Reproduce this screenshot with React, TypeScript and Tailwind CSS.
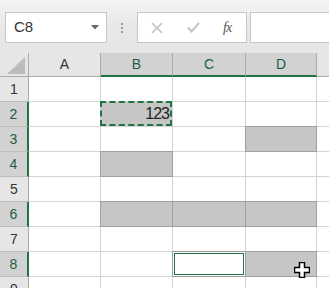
import React from "react";

const GREEN = "#217346";

type Fill = "none" | "gray" | "active";

const cols = ["A", "B", "C", "D"];
const rows = [1, 2, 3, 4, 5, 6, 7, 8, 9];
const selRows = [2, 3, 4, 6, 8];
const selCols = ["B", "C", "D"];

const fillOf = (r: number, c: string): Fill => {
    if (r === 3 && c === "D") return "gray";
    if (r === 4 && c === "B") return "gray";
    if (r === 6 && c !== "A") return "gray";
    if (r === 8 && c === "D") return "gray";
    if (r === 8 && c === "C") return "active";
    return "none";
};

const Cell = ({ r, c }: { r: number; c: string }) => {
    const fill = fillOf(r, c);
    if (r === 2 && c === "B") {
        return (
            <div className="relative border-r border-b border-[#d4d4d4] bg-[#c6c6c6]">
                <div className="absolute -left-px -top-px right-0 bottom-0 border-[2px] border-dashed border-[#217346] flex items-center justify-end pr-[1px]">
                    <span className="text-[16px] leading-none tracking-[-1px] text-[#222]">123</span>
                </div>
            </div>
        );
    }
    return (
        <div className="relative border-r border-b border-[#d4d4d4]">
            {fill === "gray" && (
                <div className="absolute -left-px -top-px right-[-1px] bottom-[-1px] bg-[#c6c6c6] border border-[#a0a0a0]" />
            )}
            {fill === "active" && (
                <div className="absolute -left-px -top-px right-[-1px] bottom-[-1px] border border-[#a0a0a0] p-[1px]">
                    <div className="h-full w-full border border-[#217346] bg-white" />
                </div>
            )}
        </div>
    );
};

const App = () => {
    return (
        <div
            className="w-[329px] h-[288px] overflow-hidden bg-[#e6e6e6] relative"
            style={{ fontFamily: "'Liberation Sans', Arial, sans-serif" }}
        >
            {/* formula bar */}
            <div className="h-[53px] bg-gradient-to-b from-[#f4f4f4] via-[#e8e8e8] to-[#e6e6e6] pt-[12px]">
                <div className="flex h-[31px] items-stretch">
                    <div className="ml-[5px] w-[102px] bg-white border border-[#c6c6c6] flex items-center justify-between pl-[8px] pr-[7px]">
                        <span className="text-[15px] text-[#333]">C8</span>
                        <svg width="8" height="5" viewBox="0 0 8 5">
                            <path d="M0 0 L8 0 L4 4.5 Z" fill="#666" />
                        </svg>
                    </div>
                    <div className="w-[30px] flex flex-col items-center justify-center gap-[2px]">
                        <span className="w-[2px] h-[2px] bg-[#999]" />
                        <span className="w-[2px] h-[2px] bg-[#999]" />
                        <span className="w-[2px] h-[2px] bg-[#999]" />
                    </div>
                    <div className="w-[110px] bg-white border border-[#c6c6c6] flex items-center pl-[13px]">
                        <svg width="12" height="12" viewBox="0 0 12 12">
                            <path d="M1 1 L11 11 M11 1 L1 11" stroke="#c3c3c3" strokeWidth="1.6" />
                        </svg>
                        <svg width="13" height="11" viewBox="0 0 13 11" className="ml-[24px]">
                            <path d="M1 5.5 L4.5 9.5 L12 1" stroke="#c3c3c3" strokeWidth="2" fill="none" />
                        </svg>
                        <span
                            className="ml-[23px] text-[14px] italic text-[#555] tracking-[-1px]"
                            style={{ fontFamily: "'Liberation Serif', serif" }}
                        >
                            fx
                        </span>
                    </div>
                    <div className="ml-[3px] flex-1 bg-white border border-[#c6c6c6] border-r-0" />
                </div>
            </div>

            {/* grid */}
            <div className="grid grid-cols-[29px_72px_72px_73px_71px_1fr] grid-rows-[24px_repeat(9,25px)] bg-white">
                {/* corner */}
                <div className="relative bg-[#e6e6e6] border-r border-b border-[#ababab]">
                    <svg width="19" height="18" viewBox="0 0 19 18" className="absolute left-[7px] top-[4px]">
                        <path d="M18 0 L18 17 L0 17 Z" fill="#bcbcbc" />
                    </svg>
                </div>
                {cols.map((c) => {
                    const sel = selCols.includes(c);
                    return (
                        <div
                            key={c}
                            className={
                                sel
                                    ? "flex items-center justify-center bg-[#d2d2d2] border-r border-[#ababab] border-b-2 border-b-[#217346] text-[14px] text-[#1e5d44]"
                                    : "flex items-center justify-center bg-[#e6e6e6] border-r border-b border-[#ababab] text-[14px] text-[#333]"
                            }
                        >
                            {c}
                        </div>
                    );
                })}
                <div className="bg-[#e6e6e6] border-b border-[#ababab]" />

                {rows.map((r) => {
                    const sel = selRows.includes(r);
                    return (
                        <React.Fragment key={r}>
                            <div
                                className={
                                    sel
                                        ? "flex items-center justify-center bg-[#d2d2d2] border-b border-[#bdbdbd] border-r-2 border-r-[#217346] text-[14px] text-[#1e5d44]"
                                        : "flex items-center justify-center bg-[#e6e6e6] border-b border-[#bdbdbd] border-r border-r-[#ababab] text-[14px] text-[#333]"
                                }
                            >
                                {r}
                            </div>
                            {cols.map((c) => (
                                <Cell key={c} r={r} c={c} />
                            ))}
                            <div className="border-b border-[#d4d4d4]" />
                        </React.Fragment>
                    );
                })}
            </div>

            {/* cursor */}
            <svg width="16" height="16" viewBox="0 0 16 16" className="absolute left-[294px] top-[262px]">
                <path
                    d="M5.5 0.5 H10.5 V5.5 H15.5 V10.5 H10.5 V15.5 H5.5 V10.5 H0.5 V5.5 H5.5 Z"
                    fill="white"
                    stroke="black"
                    strokeWidth="1.5"
                />
            </svg>
        </div>
    );
};

export default App;
